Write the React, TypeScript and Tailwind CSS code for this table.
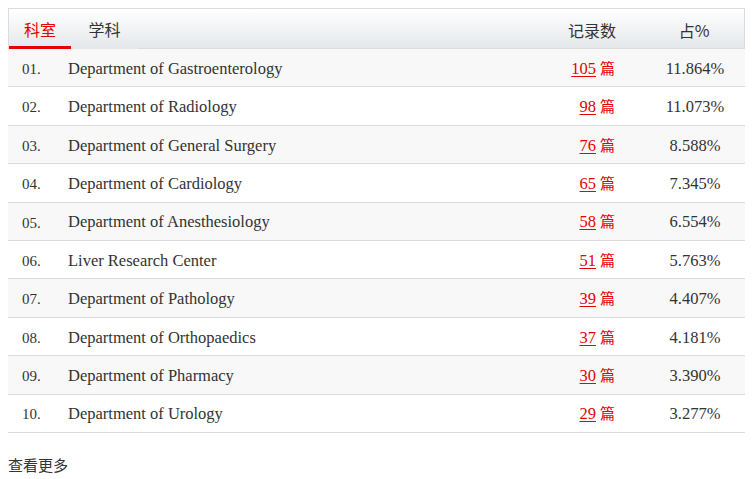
import React from "react";

const rows = [
  { no: "01.", name: "Department of Gastroenterology", count: 105, pct: "11.864%" },
  { no: "02.", name: "Department of Radiology", count: 98, pct: "11.073%" },
  { no: "03.", name: "Department of General Surgery", count: 76, pct: "8.588%" },
  { no: "04.", name: "Department of Cardiology", count: 65, pct: "7.345%" },
  { no: "05.", name: "Department of Anesthesiology", count: 58, pct: "6.554%" },
  { no: "06.", name: "Liver Research Center", count: 51, pct: "5.763%" },
  { no: "07.", name: "Department of Pathology", count: 39, pct: "4.407%" },
  { no: "08.", name: "Department of Orthopaedics", count: 37, pct: "4.181%" },
  { no: "09.", name: "Department of Pharmacy", count: 30, pct: "3.390%" },
  { no: "10.", name: "Department of Urology", count: 29, pct: "3.277%" },
];

const serif = "font-['Georgia','Liberation_Serif',serif]";
const cjk = "font-['Microsoft_YaHei','Noto_Sans_CJK_SC',sans-serif]";

export default function App() {
  return (
    <div className="bg-white w-[753px] h-[479px] pt-2 text-[#333]">
      <div className="ml-2 w-[737px]">
        <div className="flex items-end h-[41px] border border-[#dcdcdc] border-b-0 bg-gradient-to-b from-white to-[#e4e7ea]">
          <div className={`flex h-full ${cjk} text-[16px]`}>
            <div className="w-[62px] flex items-center justify-center pt-[3px] text-[#e60000] border-b-[3px] border-[#e60000]">
              科室
            </div>
            <div className="w-[67px] flex items-center justify-center pt-[3px] border-b-[3px] border-transparent">
              学科
            </div>
          </div>
          <div className="flex-1 h-full border-b border-[#dcdcdc]" />
          <div className={`flex h-full ${cjk} text-[16px] border-b border-[#dcdcdc]`}>
            <div className="w-[80px] flex items-center justify-center pt-[2px] mr-[12px]">记录数</div>
            <div className="w-[100px] flex items-center justify-center pt-[2px]">占%</div>
          </div>
        </div>
        {rows.map((r, i) => (
          <div
            key={r.no}
            className={`flex items-center h-[38.4px] pt-[3px] border-b border-[#dcdcdc] text-[16.5px] ${serif} ${
              i % 2 === 0 ? "bg-[#f8f8f8]" : "bg-white"
            }`}
          >
            <div className="w-[60px] pl-[14px] text-[15px]">{r.no}</div>
            <div className="flex-1">{r.name}</div>
            <div className="w-[80px] mr-[12px] text-right pr-[18px] text-[#e60000]">
              <span className="underline underline-offset-2">{r.count}</span>
              <span className={`${cjk} ml-1 text-[15px]`}>篇</span>
            </div>
            <div className="w-[100px] text-center">{r.pct}</div>
          </div>
        ))}
      </div>
      <div className={`mt-[21px] ml-2 text-[15px] ${cjk}`}>查看更多</div>
    </div>
  );
}
